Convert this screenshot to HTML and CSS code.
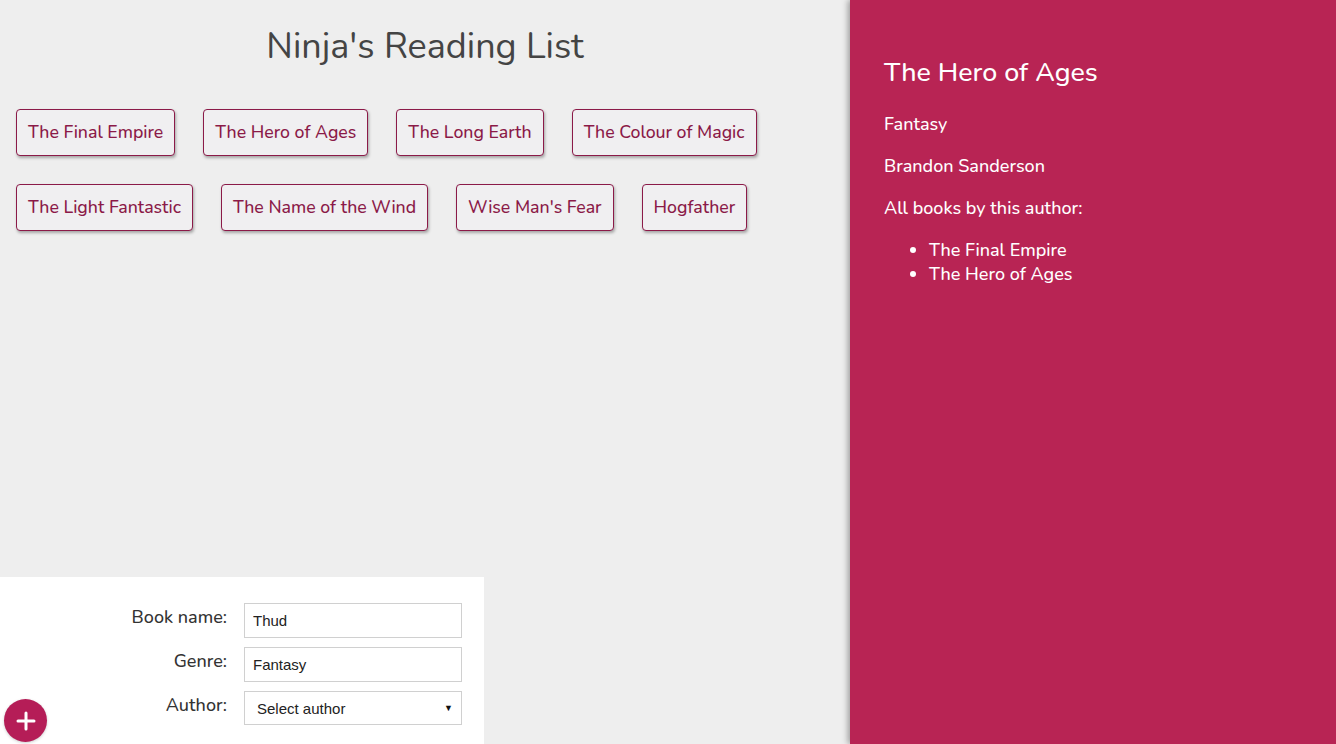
FILE: index.html
```html
<!DOCTYPE html>
<html lang="en">
<head>
<meta charset="utf-8">
<title>Ninja's Reading List</title>
<link rel="stylesheet" href="styles.css">
</head>
<body>
<div class="app">
  <div class="main">
    <h1 class="title">Ninja's Reading List</h1>
    <ul class="book-list">
      <li>The Final Empire</li>
      <li>The Hero of Ages</li>
      <li>The Long Earth</li>
      <li>The Colour of Magic</li>
      <li>The Light Fantastic</li>
      <li>The Name of the Wind</li>
      <li>Wise Man's Fear</li>
      <li>Hogfather</li>
    </ul>
    <form class="add-book">
      <div class="field">
        <label>Book name:</label>
        <input type="text" value="Thud">
      </div>
      <div class="field">
        <label>Genre:</label>
        <input type="text" value="Fantasy">
      </div>
      <div class="field">
        <label>Author:</label>
        <div class="select">Select author<span class="caret">&#9660;</span></div>
      </div>
      <button type="button" class="plus">
        <svg width="20" height="20" viewBox="0 0 20 20"><path d="M10 2v16M2 10h16" stroke="#fff" stroke-width="3" stroke-linecap="round"/></svg>
      </button>
    </form>
  </div>
  <aside class="details">
    <h2>The Hero of Ages</h2>
    <p>Fantasy</p>
    <p>Brandon Sanderson</p>
    <p>All books by this author:</p>
    <ul class="author-books">
      <li>The Final Empire</li>
      <li>The Hero of Ages</li>
    </ul>
  </aside>
</div>
</body>
</html>
```
FILE: styles.css
```css
html, body {
  margin: 0;
  padding: 0;
  height: 100%;
}
body {
  background: #eeeeee;
  font-family: "Nunito", "Lato", "Noto Sans", sans-serif;
  overflow: hidden;
}
.app {
  display: flex;
  height: 744px;
}
.main {
  width: 850px;
  flex: none;
  display: flex;
  flex-direction: column;
}
.title {
  margin: 25px 0 0;
  text-align: center;
  font-size: 36px;
  font-weight: 400;
  color: #444;
  line-height: 44px;
}
.book-list {
  list-style: none;
  margin: 0;
  padding: 40px 0 0 16px;
  display: flex;
  flex-wrap: wrap;
  gap: 28px 28px;
  width: 780px;
}
.book-list li {
  padding: 10px 11px;
  border: 1px solid #8b1a48;
  border-radius: 4px;
  box-shadow: 1px 2px 3px rgba(0,0,0,0.3);
  color: #8b1a48;
  font-size: 17.7px;
  font-weight: 500;
  line-height: 25px;
  background: #f0eff1;
}
.add-book {
  margin-top: auto;
  position: relative;
  width: 484px;
  box-sizing: border-box;
  background: #fff;
  padding: 26px 22px 19px 20px;
  display: flex;
  flex-direction: column;
  gap: 9px;
}
.field {
  display: grid;
  grid-template-columns: 1fr 218px;
  column-gap: 17px;
}
.field label {
  text-align: right;
  font-size: 18px;
  font-weight: 500;
  color: #333;
  padding-top: 2px;
}
.field input, .select {
  box-sizing: border-box;
  height: 35px;
  width: 218px;
  border: 1px solid #d0d0d0;
  font-family: "Liberation Sans", Arial, sans-serif;
  font-size: 15px;
  color: #222;
  padding: 0 8px;
  margin: 0;
  background: #fff;
}
.select {
  display: flex;
  align-items: center;
  justify-content: space-between;
  padding: 0 8px 0 12px;
  height: 34px;
}
.caret {
  font-size: 9px;
  color: #111;
}
.plus {
  position: absolute;
  left: 4px;
  bottom: 2px;
  width: 43px;
  height: 43px;
  border-radius: 50%;
  border: none;
  background: #b51d57;
  display: flex;
  align-items: center;
  justify-content: center;
  padding: 0;
  box-shadow: 0 1px 3px rgba(0,0,0,0.2);
}
.details {
  flex: 1;
  background: #b82454;
  box-shadow: -2px 0 6px rgba(0,0,0,0.35);
  padding: 54px 34px 0;
  color: #fff;
  position: relative;
}
.details h2 {
  margin: 0 0 22px;
  font-size: 26.8px;
  font-weight: 500;
  line-height: 36px;
}
.details p {
  margin: 0 0 18px;
  font-size: 18px;
  font-weight: 500;
  line-height: 24px;
}
.author-books {
  margin: 0;
  padding-left: 45px;
  font-size: 18px;
  font-weight: 500;
  line-height: 24px;
}
```
